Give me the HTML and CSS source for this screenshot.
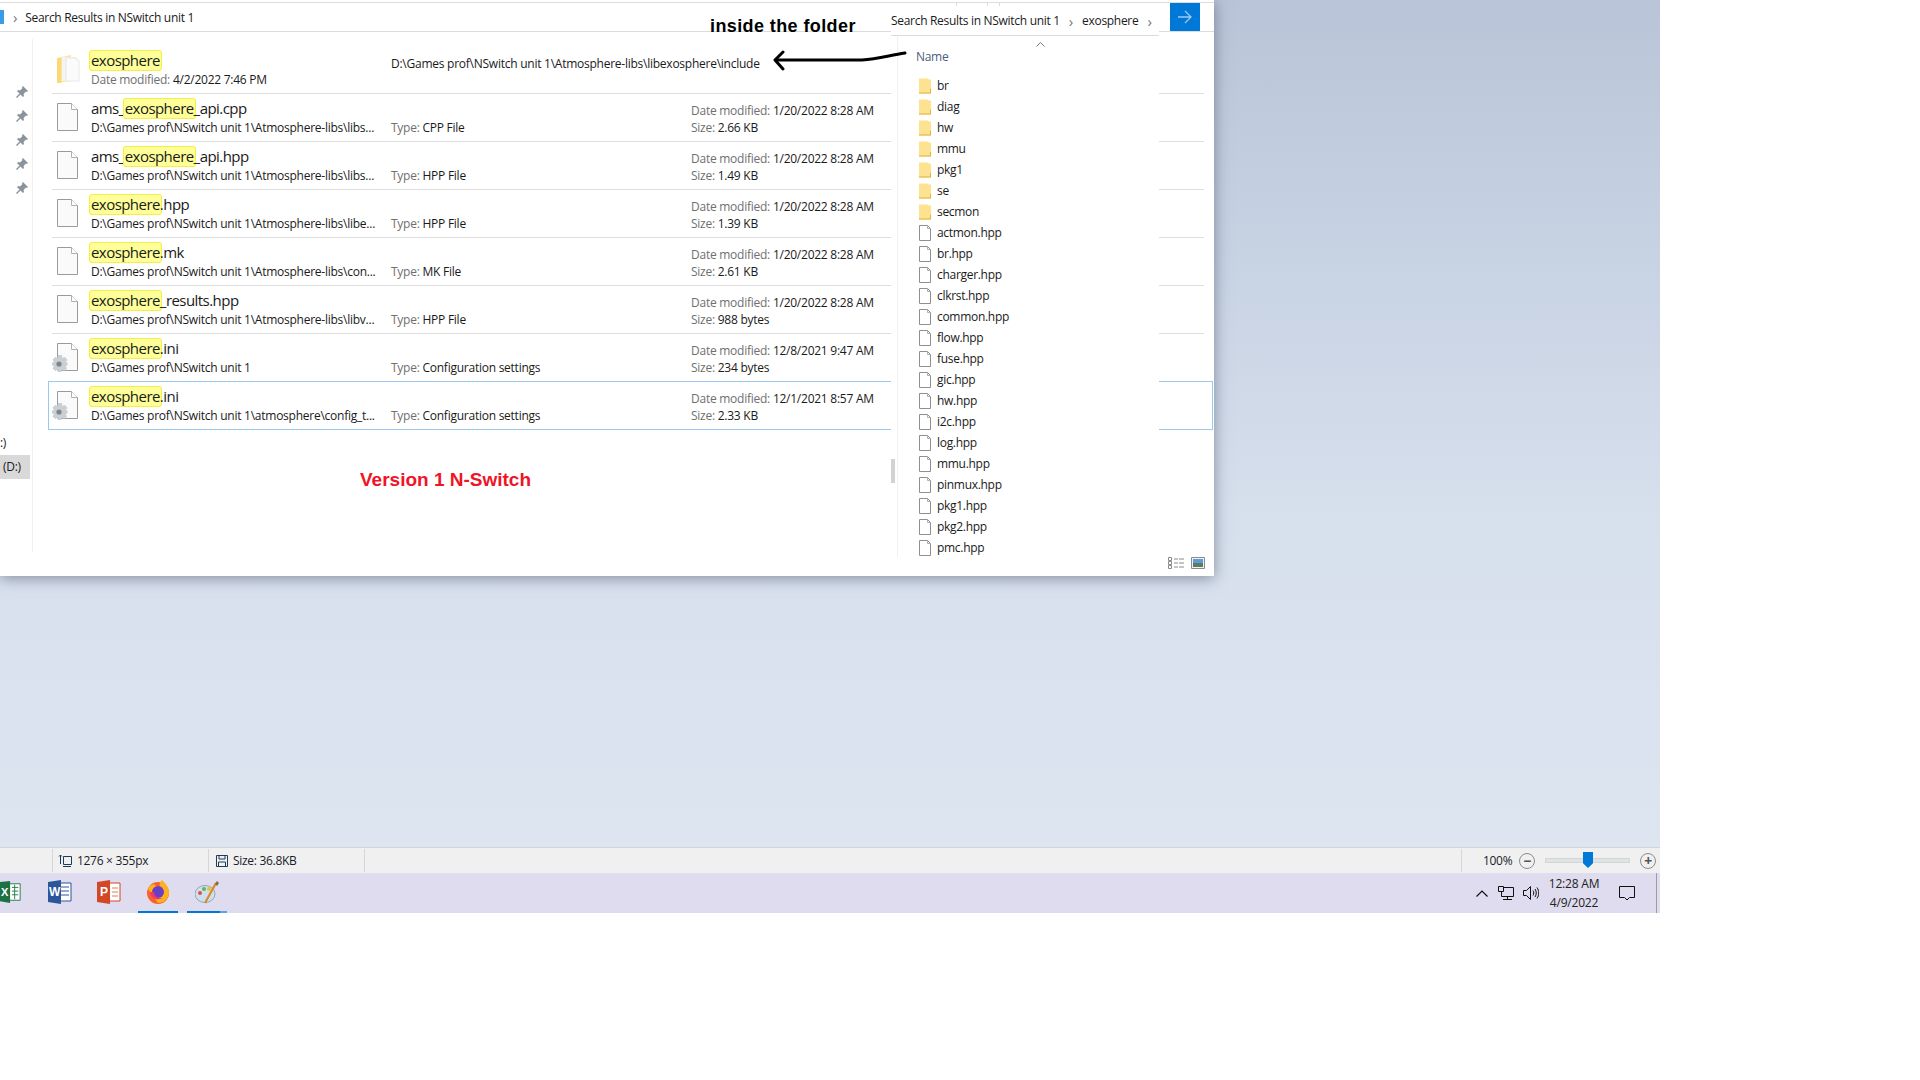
FILE: index.html
```html
<!DOCTYPE html>
<html lang="en">
<head>
  <meta charset="UTF-8">
  <title>Search Results in NSwitch unit 1</title>
  <link rel="stylesheet" href="styles.css">
</head>
<body>
  <svg class="sprites" width="0" height="0">
    <symbol id="doc" viewBox="0 0 21 28">
      <path d="M.5.5h14l6 6v21H.5z" fill="#fafafa" stroke="#9a9a9a"/>
      <path d="M14.5.5v6h6" fill="#fff" stroke="#b0b0b0"/>
    </symbol>
    <symbol id="doc-small" viewBox="0 0 12 16">
      <path d="M.5.5h8l3 3v12H.5z" fill="#fff" stroke="#8f8f8f"/>
      <path d="M8.5.5v3h3" fill="none" stroke="#b0b0b0"/>
    </symbol>
    <symbol id="folder-small" viewBox="0 0 13 16">
      <path d="M0 0h10v1h3v15H0z" fill="#fde28f"/>
      <path d="M0 15h13v1H0zM12 11h1v5h-1z" fill="#e0b23c"/>
    </symbol>
    <symbol id="gear" viewBox="0 0 16 18">
      <path d="M6 0h4l.5 3 2.500-1 2.500 3-2 2 2 .5v3l-2 .5 1.500 2.500-3 2.500-2-1.500-.5 2.500H6l-.5-2.500-2 1.500-3-2.500L2 11 0 10.500v-3L2 7 .5 5 3 2l2.500 1z" fill="#c9cfd2"/>
      <circle cx="7" cy="9" r="2.600" fill="#7d868b"/>
    </symbol>
    <symbol id="pin" viewBox="0 0 12 12">
      <path d="M7 0l5 5-1 1-1-.5L7.500 8 8 10l-1 1-2.500-2.500L1 12l-1-1 3.500-3.500L1 5l1-1 2 .5L6.500 2 6 1z" fill="#8a939c"/>
    </symbol>
  </svg>

  <div class="screen">
    <main class="workspace">
      <section class="explorer">
        <header class="address-bar">
          <span class="address-icon"></span>
          <span class="chevron">&rsaquo;</span>
          <span>Search Results in NSwitch unit 1</span>
        </header>

        <div class="explorer-body">
          <nav class="sidebar">
            <div class="pins">
              <svg class="pin"><use href="#pin"/></svg>
              <svg class="pin"><use href="#pin"/></svg>
              <svg class="pin"><use href="#pin"/></svg>
              <svg class="pin"><use href="#pin"/></svg>
              <svg class="pin"><use href="#pin"/></svg>
            </div>
            <div class="drive drive-cut">:)</div>
            <div class="drive drive-active">(D:)</div>
          </nav>

          <div class="results">
            <article class="row">
              <svg class="folder-icon" viewBox="0 0 23 28">
                <path d="M0 3l14-3v26l-14 2z" fill="#fce49a"/>
                <path d="M5 2h14l3 3v21H5z" fill="#f4f4f2"/>
                <path d="M9 3h9l4 3v20H9z" fill="#fbfbfb" stroke="#e8e8e8"/>
                <path d="M0 3h4v25H0z" fill="#fbd978"/>
              </svg>
              <div class="cell">
                <div class="name"><mark>exosphere</mark></div>
                <div class="meta"><span class="label">Date modified:</span> 4/2/2022 7:46 PM</div>
              </div>
              <div class="cell cell-path">D:\Games prof\NSwitch unit 1\Atmosphere-libs\libexosphere\include</div>
            </article>

            <article class="row">
              <svg class="file-icon"><use href="#doc"/></svg>
              <div class="cell">
                <div class="name">ams_<mark>exosphere</mark>_api.cpp</div>
                <div class="meta">D:\Games prof\NSwitch unit 1\Atmosphere-libs\libs...</div>
              </div>
              <div class="cell cell-type"><span class="label">Type:</span> CPP File</div>
              <div class="cell cell-info">
                <div><span class="label">Date modified:</span> 1/20/2022 8:28 AM</div>
                <div><span class="label">Size:</span> 2.66 KB</div>
              </div>
            </article>

            <article class="row">
              <svg class="file-icon"><use href="#doc"/></svg>
              <div class="cell">
                <div class="name">ams_<mark>exosphere</mark>_api.hpp</div>
                <div class="meta">D:\Games prof\NSwitch unit 1\Atmosphere-libs\libs...</div>
              </div>
              <div class="cell cell-type"><span class="label">Type:</span> HPP File</div>
              <div class="cell cell-info">
                <div><span class="label">Date modified:</span> 1/20/2022 8:28 AM</div>
                <div><span class="label">Size:</span> 1.49 KB</div>
              </div>
            </article>

            <article class="row">
              <svg class="file-icon"><use href="#doc"/></svg>
              <div class="cell">
                <div class="name"><mark>exosphere</mark>.hpp</div>
                <div class="meta">D:\Games prof\NSwitch unit 1\Atmosphere-libs\libe...</div>
              </div>
              <div class="cell cell-type"><span class="label">Type:</span> HPP File</div>
              <div class="cell cell-info">
                <div><span class="label">Date modified:</span> 1/20/2022 8:28 AM</div>
                <div><span class="label">Size:</span> 1.39 KB</div>
              </div>
            </article>

            <article class="row">
              <svg class="file-icon"><use href="#doc"/></svg>
              <div class="cell">
                <div class="name"><mark>exosphere</mark>.mk</div>
                <div class="meta">D:\Games prof\NSwitch unit 1\Atmosphere-libs\con...</div>
              </div>
              <div class="cell cell-type"><span class="label">Type:</span> MK File</div>
              <div class="cell cell-info">
                <div><span class="label">Date modified:</span> 1/20/2022 8:28 AM</div>
                <div><span class="label">Size:</span> 2.61 KB</div>
              </div>
            </article>

            <article class="row">
              <svg class="file-icon"><use href="#doc"/></svg>
              <div class="cell">
                <div class="name"><mark>exosphere</mark>_results.hpp</div>
                <div class="meta">D:\Games prof\NSwitch unit 1\Atmosphere-libs\libv...</div>
              </div>
              <div class="cell cell-type"><span class="label">Type:</span> HPP File</div>
              <div class="cell cell-info">
                <div><span class="label">Date modified:</span> 1/20/2022 8:28 AM</div>
                <div><span class="label">Size:</span> 988 bytes</div>
              </div>
            </article>

            <article class="row">
              <span class="ini-icon">
                <svg class="file-icon"><use href="#doc"/></svg>
                <svg class="gear"><use href="#gear"/></svg>
              </span>
              <div class="cell">
                <div class="name"><mark>exosphere</mark>.ini</div>
                <div class="meta">D:\Games prof\NSwitch unit 1</div>
              </div>
              <div class="cell cell-type"><span class="label">Type:</span> Configuration settings</div>
              <div class="cell cell-info">
                <div><span class="label">Date modified:</span> 12/8/2021 9:47 AM</div>
                <div><span class="label">Size:</span> 234 bytes</div>
              </div>
            </article>

            <article class="row row-selected">
              <span class="ini-icon">
                <svg class="file-icon"><use href="#doc"/></svg>
                <svg class="gear"><use href="#gear"/></svg>
              </span>
              <div class="cell">
                <div class="name"><mark>exosphere</mark>.ini</div>
                <div class="meta">D:\Games prof\NSwitch unit 1\atmosphere\config_t...</div>
              </div>
              <div class="cell cell-type"><span class="label">Type:</span> Configuration settings</div>
              <div class="cell cell-info">
                <div><span class="label">Date modified:</span> 12/1/2021 8:57 AM</div>
                <div><span class="label">Size:</span> 2.33 KB</div>
              </div>
            </article>
          </div>
        </div>

        <!-- second explorer pasted over the first one -->
        <div class="toolbar-boxes">
          <span class="box box-a"></span>
          <span class="box box-b"></span>
          <span class="go-button">
            <svg width="16" height="14" viewBox="0 0 16 14"><path d="M1 7h13M8 1l6 6-6 6" fill="none" stroke="#9cc9f2" stroke-width="1.300"/></svg>
          </span>
        </div>

        <aside class="pasted">
          <div class="crumbs">
            <span>Search Results in NSwitch unit 1</span>
            <span class="chevron">&rsaquo;</span>
            <span>exosphere</span>
            <span class="chevron">&rsaquo;</span>
          </div>
          <div class="pasted-body">
            <div class="scroll-thumb"></div>
            <div class="file-list">
              <div class="col-head">
                <span>Name</span>
                <svg class="sort-caret" width="9" height="5" viewBox="0 0 9 5"><path d="M.5 4.500l4-4 4 4" fill="none" stroke="#777"/></svg>
              </div>
              <ul class="files">
                <li><svg class="small-icon"><use href="#folder-small"/></svg>br</li>
                <li><svg class="small-icon"><use href="#folder-small"/></svg>diag</li>
                <li><svg class="small-icon"><use href="#folder-small"/></svg>hw</li>
                <li><svg class="small-icon"><use href="#folder-small"/></svg>mmu</li>
                <li><svg class="small-icon"><use href="#folder-small"/></svg>pkg1</li>
                <li><svg class="small-icon"><use href="#folder-small"/></svg>se</li>
                <li><svg class="small-icon"><use href="#folder-small"/></svg>secmon</li>
                <li><svg class="small-icon"><use href="#doc-small"/></svg>actmon.hpp</li>
                <li><svg class="small-icon"><use href="#doc-small"/></svg>br.hpp</li>
                <li><svg class="small-icon"><use href="#doc-small"/></svg>charger.hpp</li>
                <li><svg class="small-icon"><use href="#doc-small"/></svg>clkrst.hpp</li>
                <li><svg class="small-icon"><use href="#doc-small"/></svg>common.hpp</li>
                <li><svg class="small-icon"><use href="#doc-small"/></svg>flow.hpp</li>
                <li><svg class="small-icon"><use href="#doc-small"/></svg>fuse.hpp</li>
                <li><svg class="small-icon"><use href="#doc-small"/></svg>gic.hpp</li>
                <li><svg class="small-icon"><use href="#doc-small"/></svg>hw.hpp</li>
                <li><svg class="small-icon"><use href="#doc-small"/></svg>i2c.hpp</li>
                <li><svg class="small-icon"><use href="#doc-small"/></svg>log.hpp</li>
                <li><svg class="small-icon"><use href="#doc-small"/></svg>mmu.hpp</li>
                <li><svg class="small-icon"><use href="#doc-small"/></svg>pinmux.hpp</li>
                <li><svg class="small-icon"><use href="#doc-small"/></svg>pkg1.hpp</li>
                <li><svg class="small-icon"><use href="#doc-small"/></svg>pkg2.hpp</li>
                <li><svg class="small-icon"><use href="#doc-small"/></svg>pmc.hpp</li>
              </ul>
            </div>
          </div>
        </aside>

        <div class="view-toggles">
          <svg width="16" height="12" viewBox="0 0 16 12">
            <path d="M.5.5h3v3h-3zM.5 4.500h3v3h-3zM.5 8.500h3v3h-3z" fill="none" stroke="#8a8a8a"/>
            <path d="M6 2h4M11 2h5M6 6h4M11 6h5M6 10h4M11 10h5" stroke="#8a8a8a"/>
          </svg>
          <svg width="14" height="12" viewBox="0 0 14 12">
            <path d="M.5.500h13v11H.5z" fill="#eef2f5" stroke="#8a8a8a"/>
            <path d="M2 2h10v4H2z" fill="#5a9bd8"/>
            <path d="M2 6h10v4H2z" fill="#5f7a5c"/>
          </svg>
        </div>

        <!-- hand drawn notes on the screenshot -->
        <div class="note note-folder">inside the folder</div>
        <svg class="note-arrow" width="136" height="26" viewBox="0 0 136 26">
          <path d="M133 3C115 6 105 9 90 10H4" fill="none" stroke="#000" stroke-width="3" stroke-linecap="round"/>
          <path d="M11 2L3 10l8 9" fill="none" stroke="#000" stroke-width="3" stroke-linecap="round" stroke-linejoin="round"/>
        </svg>
        <div class="note note-version">Version 1 N-Switch</div>
      </section>
    </main>

    <footer class="statusbar">
      <div class="status-cell status-gap"></div>
      <div class="status-cell status-dims">
        <svg width="14" height="14" viewBox="0 0 14 14">
          <path d="M5.500 2.500h8v8h-8zM2.500 1v9M1 2.500L2.500 1 4 2.500M5 12.500h8" fill="none" stroke="#1d3b5a"/>
        </svg>
        1276 &times; 355px
      </div>
      <div class="status-cell status-size">
        <svg width="12" height="12" viewBox="0 0 12 12">
          <path d="M.5.500h11v11H.5zM3 .5v3.500h6V.5M2.500 11.500V7h7v4.500" fill="none" stroke="#1d3b5a"/>
        </svg>
        Size: 36.8KB
      </div>
      <div class="status-cell status-fill"></div>
      <div class="zoom-box">
        <span class="zoom-value">100%</span>
        <span class="zoom-btn">&minus;</span>
        <span class="slider"><span class="slider-thumb"></span></span>
        <span class="zoom-btn">+</span>
      </div>
    </footer>

    <div class="taskbar">
      <div class="apps">
        <span class="app app-cut">
          <svg width="24" height="24" viewBox="0 0 24 24">
            <path d="M10 3h12v18H10z" fill="#fff" stroke="#1f7a47"/>
            <path d="M13 7h7M13 11h7M13 15h7M16 4v16" stroke="#1f7a47"/>
            <path d="M0 1l11-1v24L0 22z" fill="#1e7145"/>
            <text class="app-letter" x="1" y="16">X</text>
          </svg>
        </span>
        <span class="app">
          <svg width="24" height="24" viewBox="0 0 24 24">
            <path d="M10 3h13v18H10z" fill="#fff" stroke="#2b579a"/>
            <path d="M13 7h8M13 11h8M13 15h8" stroke="#2b579a"/>
            <path d="M0 2l13-2v24L0 22z" fill="#2b579a"/>
            <text class="app-letter" x="1" y="16">W</text>
          </svg>
        </span>
        <span class="app">
          <svg width="24" height="24" viewBox="0 0 24 24">
            <path d="M10 3h13v18H10z" fill="#fff" stroke="#d24726"/>
            <path d="M15 8h6M15 12h6M15 16h6" stroke="#e07a5f"/>
            <path d="M0 2l13-2v24L0 22z" fill="#d24726"/>
            <text class="app-letter" x="3" y="16">P</text>
          </svg>
        </span>
        <span class="app app-open">
          <svg width="24" height="24" viewBox="0 0 24 24">
            <circle cx="12" cy="13" r="11" fill="#f8632b"/>
            <path d="M2 9C3 5 6 5 8 4c1 2 3 3 6 3C13 4 14 2 16 0c3 3 7 7 7 12 0 6-4 11-11 11" fill="#ffb01f"/>
            <circle cx="12" cy="12" r="6" fill="#6a3fc4"/>
            <path d="M4 12c1 7 8 9 13 6-4 1-9-1-9-6z" fill="#f5366b"/>
          </svg>
        </span>
        <span class="app app-open app-active">
          <svg width="24" height="24" viewBox="0 0 24 24">
            <ellipse cx="10" cy="14" rx="10" ry="8.500" fill="#cfe0ec" stroke="#8fa9ba"/>
            <circle cx="5" cy="13" r="2" fill="#d9534f"/>
            <circle cx="9" cy="9" r="2" fill="#5cb85c"/>
            <circle cx="14" cy="9" r="2" fill="#e8c33a"/>
            <path d="M10 23L21 3" stroke="#d98a2c" stroke-width="2.200"/>
            <path d="M20 4l2-3 2 2-2 3z" fill="#8a6a4c"/>
          </svg>
        </span>
      </div>
      <div class="tray">
        <svg class="tray-caret" width="12" height="7" viewBox="0 0 12 7"><path d="M.5 6.500L6 1l5.500 5.500" fill="none" stroke="#111" stroke-width="1.200"/></svg>
        <svg width="16" height="15" viewBox="0 0 16 15"><path d="M3.500 1.500h12v9h-12zM9.500 10.500v3M5 13.500h9" fill="none" stroke="#111"/><path d="M.5.500h5v5h-5z" fill="#dedcee" stroke="#111"/></svg>
        <svg width="16" height="14" viewBox="0 0 16 14"><path d="M.5 4.500h3l4-4v13l-4-4h-3zM10 4.500c1 1.500 1 3.500 0 5M12 3c1.700 2.500 1.700 5.500 0 8M14 1.500c2.300 3.500 2.300 7.500 0 11" fill="none" stroke="#111"/></svg>
        <div class="clock">
          <div>12:28 AM</div>
          <div>4/9/2022</div>
        </div>
        <svg class="tray-note" width="16" height="15" viewBox="0 0 16 15"><path d="M.5.500h15v11h-5l-2.500 2.500-2.500-2.500h-5z" fill="none" stroke="#111"/></svg>
      </div>
    </div>
  </div>
</body>
</html>
```

FILE: styles.css
```css
html, body {
  margin: 0;
  padding: 0;
  height: 100%;
  background-color: #fff;
}

body {
  font-family: "Open Sans", "Noto Sans", Arial, sans-serif;
  font-size: 12px;
  color: #1a1a1a;
  overflow: hidden;
}

.sprites {
  position: absolute;
}

.screen {
  width: 1660px;
  height: 913px;
  display: flex;
  flex-direction: column;
}

.workspace {
  height: 848px;
  flex: none;
  background: linear-gradient(#b9c4d8, #c7d2e3 30%, #d6dfec 60%, #dde5f1);
  border-bottom: 1px solid #d2d4d6;
  box-sizing: border-box;
  overflow: hidden;
}

/* explorer window */

.explorer {
  position: relative;
  width: 1214px;
  height: 576px;
  padding-top: 2px;
  box-sizing: border-box;
  background-color: #fff;
  box-shadow: 0 2px 14px rgba(60, 70, 90, 0.55);
}

.address-bar {
  height: 28px;
  display: flex;
  align-items: center;
  gap: 8px;
  border-top: 1px solid #dcdcdc;
  border-bottom: 1px solid #dcdcdc;
  letter-spacing: -0.3px;
}

.address-icon {
  width: 4px;
  height: 14px;
  margin-right: 1px;
  background-color: #3a9be8;
}

.chevron {
  color: #777;
  font-size: 15px;
  line-height: 12px;
}

.explorer-body {
  display: flex;
  height: 513px;
  margin-top: 7px;
}

.sidebar {
  width: 32px;
  flex: none;
  border-right: 1px solid #f0f0f0;
  display: flex;
  flex-direction: column;
}

.pins {
  display: flex;
  flex-direction: column;
  gap: 12px;
  padding: 47px 0 0 16px;
}

.pin {
  width: 12px;
  height: 12px;
}

.drive {
  height: 24px;
  line-height: 24px;
  margin-right: 2px;
  padding-left: 3px;
  letter-spacing: -0.3px;
}

.drive-cut {
  margin-top: 243px;
  margin-bottom: 6px;
  padding-left: 0;
  height: 12px;
  line-height: 12px;
}

.drive-active {
  background-color: #d9d9d9;
}

.results {
  flex: 1;
  padding: 7px 10px 0 19px;
}

.row {
  height: 47px;
  display: grid;
  grid-template-columns: 39px 300px 300px 1fr;
  border-bottom: 1px solid #dedede;
  position: relative;
  line-height: 17px;
  letter-spacing: -0.25px;
}

.row-selected {
  margin: -1px -9px 0 -4px;
  padding-left: 3px;
  border: 1px solid #99c9ee;
}

.cell {
  padding-top: 4px;
  white-space: nowrap;
}

.name {
  font-size: 15px;
  line-height: 21px;
  height: 21px;
  letter-spacing: -0.55px;
}

mark {
  display: inline-block;
  background-color: #ffff99;
  color: inherit;
  border-radius: 3px;
  outline: 1px solid #f5ef45;
  outline-offset: -1px;
  padding: 0 2px;
  margin: 0 -2px;
}

.label {
  color: #6f6f6f;
}

.cell-path {
  padding-top: 9px;
}

.cell-type {
  padding-top: 25px;
}

.cell-info {
  padding-top: 8px;
  line-height: 17px;
}

.folder-icon {
  width: 23px;
  height: 28px;
  margin: 9px 0 0 5px;
}

.file-icon {
  width: 21px;
  height: 28px;
  margin: 9px 0 0 5px;
}

.ini-icon {
  position: relative;
  display: block;
}

.gear {
  position: absolute;
  left: 0;
  top: 21px;
  width: 16px;
  height: 18px;
}

/* the second window pasted on top */

.toolbar-boxes {
  position: absolute;
  top: 2px;
  left: 891px;
  width: 310px;
  height: 30px;
}

.box {
  position: absolute;
  top: 0;
  height: 30px;
  border-top: 1px solid #dcdcdc;
  border-left: 1px solid #dcdcdc;
}

.box-a {
  left: 65px;
  width: 30px;
  border-right: 1px solid #dcdcdc;
}

.box-b {
  left: 108px;
  width: 200px;
}

.go-button {
  position: absolute;
  left: 279px;
  top: 1px;
  width: 30px;
  height: 28px;
  background-color: #0078d7;
  display: flex;
  align-items: center;
  justify-content: center;
}

.pasted {
  position: absolute;
  left: 891px;
  top: 6px;
  width: 268px;
  height: 550px;
  background-color: #fff;
}

.crumbs {
  height: 29px;
  display: flex;
  align-items: center;
  gap: 9px;
  border-bottom: 1px solid #dcdcdc;
  letter-spacing: -0.3px;
}

.pasted-body {
  position: relative;
  height: 520px;
}

.scroll-thumb {
  position: absolute;
  left: 0;
  top: 423px;
  width: 4px;
  height: 24px;
  background-color: #d2d2d2;
}

.file-list {
  margin-left: 6px;
  height: 521px;
  border-left: 1px solid #f0f0f0;
  padding-left: 18px;
  letter-spacing: -0.3px;
}

.col-head {
  position: relative;
  color: #4c607a;
  height: 39px;
  padding-top: 12px;
  box-sizing: border-box;
}

.sort-caret {
  position: absolute;
  left: 120px;
  top: 6px;
}

.files {
  list-style: none;
  margin: 0;
  padding: 0 0 0 3px;
}

.files li {
  height: 21px;
  line-height: 21px;
  display: flex;
  align-items: center;
  gap: 6px;
}

.small-icon {
  width: 12px;
  height: 16px;
  flex: none;
}

.view-toggles {
  position: absolute;
  left: 1168px;
  top: 557px;
  display: flex;
  gap: 7px;
}

/* notes */

.note {
  position: absolute;
  font-family: "Liberation Sans", Arial, sans-serif;
  font-weight: bold;
  white-space: nowrap;
}

.note-folder {
  left: 710px;
  top: 15px;
  font-size: 18px;
  line-height: 22px;
  letter-spacing: 0.4px;
  color: #000;
}

.note-version {
  left: 360px;
  top: 468px;
  font-size: 19px;
  line-height: 24px;
  color: #f01428;
}

.note-arrow {
  position: absolute;
  left: 772px;
  top: 50px;
}

/* status bar of the image viewer */

.statusbar {
  height: 25px;
  flex: none;
  display: flex;
  align-items: stretch;
  background-color: #f0f0f0;
  color: #1b1b2b;
  letter-spacing: -0.3px;
}

.status-cell {
  display: flex;
  align-items: center;
  gap: 5px;
  border-right: 1px solid #d6d6d6;
  margin: 1px 0;
  box-sizing: border-box;
}

.status-gap {
  width: 53px;
}

.status-dims {
  width: 156px;
  padding-left: 5px;
}

.status-size {
  width: 156px;
  padding-left: 7px;
}

.status-fill {
  width: 1097px;
}

.zoom-box {
  flex: 1;
  display: flex;
  align-items: center;
  padding-left: 21px;
}

.zoom-value {
  width: 36px;
}

.zoom-btn {
  width: 14px;
  height: 14px;
  border: 1px solid #8d8d8d;
  border-radius: 50%;
  display: flex;
  align-items: center;
  justify-content: center;
  color: #555;
  font-size: 14px;
  font-weight: bold;
  line-height: 14px;
}

.slider {
  position: relative;
  width: 83px;
  height: 3px;
  margin: 0 10px;
  background-color: #dfe3e3;
  border: 1px solid #d2d6d6;
}

.slider-thumb {
  position: absolute;
  left: 37px;
  top: -7px;
  width: 10px;
  height: 16px;
  background-color: #0078d7;
  clip-path: polygon(0 0, 100% 0, 100% 70%, 50% 100%, 0 70%);
}

/* windows taskbar */

.taskbar {
  height: 40px;
  flex: none;
  display: flex;
  justify-content: space-between;
  background-color: #dedcee;
  border-right: 3px solid transparent;
  box-shadow: inset -1px 0 0 #9c9ba8;
}

.apps {
  display: flex;
}

.app {
  width: 40px;
  margin-right: 9px;
  box-sizing: border-box;
  display: flex;
  align-items: center;
  justify-content: center;
  padding-bottom: 3px;
}

.app-cut {
  width: 22px;
  margin-right: 18px;
  justify-content: flex-end;
  overflow: hidden;
}

.app-open {
  border-bottom: 2px solid #0078d7;
  padding-bottom: 1px;
}

.app-active {
  border-image: linear-gradient(to right, #0078d7 80%, #5aa5e6 80%) 1;
}

.app-letter {
  font-family: "Liberation Sans", Arial, sans-serif;
  font-size: 12px;
  font-weight: bold;
  fill: #fff;
}

.tray {
  display: flex;
  align-items: center;
  gap: 9px;
  padding-right: 22px;
}

.tray-caret {
  margin-right: 1px;
}

.clock {
  width: 62px;
  margin-left: -5px;
  text-align: center;
  line-height: 19px;
  letter-spacing: -0.2px;
  color: #222;
}

.tray-note {
  margin-left: 5px;
}
```
